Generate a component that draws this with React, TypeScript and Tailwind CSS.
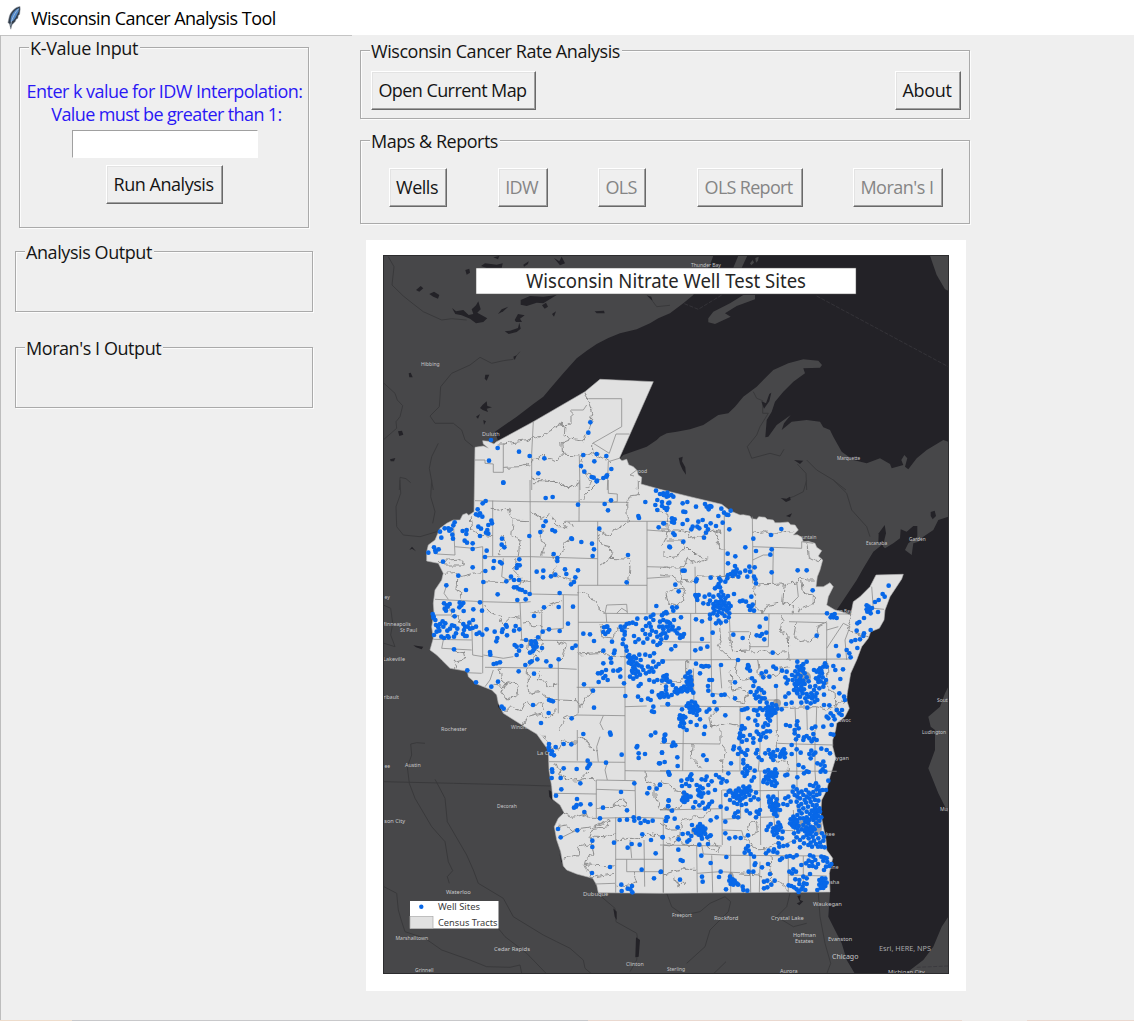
import type { ReactNode } from "react";

type Sheet = { x: number; y: number; data: string };

/* Survey sheets are drawn at three units to the pixel, each from its own origin. */
const NW = { x: 370, y: 240 };
const NE = { x: 660, y: 240 };
const W = { x: 370, y: 480 };
const E = { x: 660, y: 480 };
const SW = { x: 370, y: 730 };
const SE = { x: 660, y: 730 };

function place(origin: { x: number; y: number }, data: string): number[][] {
  return data
    .trim()
    .split(/\s+/)
    .map((pair) => {
      const [x, y] = pair.split(",").map(Number);
      return [origin.x + x / 3, origin.y + y / 3];
    });
}

function shape(...parts: [{ x: number; y: number }, string][]): string {
  return parts
    .flatMap(([o, d]) => place(o, d))
    .map(([x, y]) => x.toFixed(1) + "," + y.toFixed(1))
    .join(" ");
}

const SUPERIOR = shape(
  [NW, "375,575 440,530 490,492 520,470 545,440 580,400 620,355 650,332 680,312 715,294 750,280 800,268 840,250 865,235 900,220"],
  [NE, "40,212 70,190 100,165 125,110 150,75 160,47 865,47 865,605 850,600 800,630 770,655 745,688 735,680 742,655 733,645 724,660 730,675 695,685 690,672 660,655 620,670 580,660 545,635 520,590 510,570 490,562 480,545 440,540 395,545 365,570 372,550 392,525 350,555 325,590 316,592 320,540 335,515 345,485 370,455 400,425 435,400 430,385 480,383 486,375 475,362 430,358 385,370 340,390 315,415 290,440 250,470 225,500 205,520 175,525 130,555 90,568 50,575 20,580 0,590"],
  [NW, "860,600 830,620 760,645 740,665 500,620 385,605"],
);
const MICHIGAN = shape(
  [E, "865,110 835,120 820,150 790,170 775,185 760,190 755,225 735,210 745,190 772,170 772,138 760,138 740,155 722,148 720,175 700,190 675,205 665,195 640,215 610,265 590,300 560,345 530,390 500,500 450,700"],
  [SE, "450,300 470,470 510,486 505,560 520,590 545,640 560,690 585,732 735,732 790,690 820,650 845,590 865,560 865,250 835,190 805,115 825,60 825,0"],
  [E, "812,740 805,710 840,680 855,640 865,620"],
);
const WISCONSIN = shape(
  [NW, "315,622 340,618 355,624 340,612 338,602 355,604 372,612 378,606 490,545 645,455 690,418 850,425 748,655 756,662 770,658 776,674 790,680 800,690 805,705 815,712 813,732"],
  [E, "0,28 90,50 185,73 210,92 240,105 250,104 270,108 275,116 290,118 296,110 315,112 322,118 340,120 345,128 360,128 385,126 392,134 405,135 415,150 400,165 412,164 425,172 430,185 445,184 465,190 470,202 485,212 475,228 488,240 480,270 472,290 468,320 490,320 510,308 520,320 505,350 500,375 525,390 545,395 572,405 580,365 600,350 630,320 648,285 730,283 725,297 690,350 675,390 672,420 658,445 632,455 625,475 605,500 590,540 572,580 562,640 560,660 568,685 555,710 530,730"],
  [SE, "527,0 518,30 518,50 527,85 510,140 500,180 485,210 482,250 490,290 498,330 500,360 518,385 508,430 510,486 0,490"],
  [SW, "685,488 680,465 668,445 620,432 590,420 580,408 572,365 560,330 553,290 565,265 582,248 570,225 548,208 545,170 537,120 535,60 520,40 500,12"],
  [W, "480,750 440,725 400,700 385,670 380,645 365,630 340,620 320,612 295,590 292,574 240,565 215,540 200,525 180,510 190,475 185,440 192,400 190,370 195,330 215,300 220,280 205,250 170,243 170,215 175,195 195,180 210,145 230,130 250,120 270,120 278,104 290,100 296,106 312,95"],
);

const ISLANDS = [
  shape([NE, "145,235 160,215 210,190 250,165 285,165 285,178 230,198 195,220 212,230 165,252 145,247"]),
  shape([NE, "220,83 235,47 262,47 245,83"]),
  shape([NE, "270,70 278,60 282,68 274,76"]),
  shape([NE, "286,54 296,50 294,62 288,68"]),
  shape([NE, "810,47 865,47 865,152 855,148 830,105"]),
];

const PONDS: Sheet[] = [
  { ...NW, data: "138,150 152,138 160,145 148,155" },
  { ...NW, data: "178,162 192,155 208,165 204,176 190,170" },
  { ...NW, data: "246,204 258,214 280,210 296,225 310,222 305,208 318,196 325,184 332,208 322,218 352,235 340,246 318,250 300,236 275,226 256,222" },
  { ...NW, data: "384,222 395,208 415,200 400,214" },
  { ...NW, data: "333,78 345,70 380,74 398,70 395,84 350,84" },
  { ...NW, data: "370,52 388,48 384,58" },
  { ...NW, data: "460,74 476,64 474,72 462,80" },
  { ...NW, data: "286,90 298,86 300,98 290,104" },
  { ...NW, data: "552,54 570,76 585,70 575,50 568,64" },
  { ...NW, data: "452,180 480,168 520,170 560,165 520,190 500,188 470,198 452,194" },
  { ...NW, data: "516,196 528,188 534,200 524,206" },
  { ...NW, data: "546,222 558,214 552,230" },
  { ...NW, data: "434,240 444,222 464,226 450,236 456,246 438,246" },
  { ...NW, data: "404,274 420,272 444,264 448,248 452,266 440,276 416,282" },
  { ...NW, data: "674,214 702,212 704,220 680,220" },
  { ...NW, data: "830,166 848,184 844,170" },
  { ...NW, data: "116,400 122,398 128,412 118,412" },
  { ...NW, data: "346,404 358,404 350,422 344,416" },
  { ...NW, data: "338,494 350,484 352,498 366,502 350,506 354,516 338,510 330,504" },
  { ...NW, data: "318,530 330,522 324,536" },
  { ...NW, data: "340,540 348,544 342,554" },
  { ...NW, data: "84,574 96,572 100,584 88,588" },
  { ...NW, data: "60,658 76,654 72,664 62,664" },
  { ...NW, data: "430,350 440,346 434,360" },
  { ...NE, data: "56,654 68,650 66,664 76,682 78,704 68,690 60,672" },
  { ...NE, data: "304,484 318,490 328,462 334,458 328,484 312,506" },
  { ...NE, data: "402,660 430,662 420,672" },
  { ...E, data: "362,54 380,56 390,50 392,60 378,66" },
  { ...E, data: "378,108 396,100 390,112" },
  { ...E, data: "656,160 674,135 678,160 668,200 655,190" },
  { ...E, data: "812,96 824,92 828,108 818,118 812,108" },
  { ...W, data: "118,210 126,200 138,214 126,206" },
  { ...W, data: "130,496 144,498 160,500 155,508 138,502" },
  { ...W, data: "384,668 396,680 394,692 384,680" },
  { ...SW, data: "536,180 546,185 548,212 538,200" },
  { ...SW, data: "568,262 582,244 582,254 572,270" },
  { ...SW, data: "568,370 578,400 574,396" },
  { ...SW, data: "730,535 740,545 740,570 734,560" },
  { ...SW, data: "798,622 810,630 806,680 796,682" },
  { ...SE, data: "412,498 422,496 420,510 430,514 418,526 410,520 420,516" },
];

const RIVERS: Sheet[] = [
  { ...NW, data: "55,50 72,80 66,135 100,168 130,192 160,215 215,240 245,236 290,240" },
  { ...NW, data: "450,335 430,358 400,362 365,370 330,352 300,375 245,400 212,440 208,500 180,528 195,550 250,550 275,570 285,600 310,620" },
  { ...NW, data: "42,430 75,460 82,480 98,497 90,530 78,545 80,565 42,598" },
  { ...NW, data: "205,610 185,650 178,685 190,750" },
  { ...NW, data: "88,750 90,712 108,716 122,728" },
  { ...NW, data: "848,184 860,200 900,196" },
  { ...W, data: "90,0 92,40 78,80 80,140 100,165 150,170 200,155" },
  { ...W, data: "185,0 182,50 195,95 188,130" },
  { ...W, data: "40,375 62,385 68,430 62,465 75,500 42,490" },
  { ...NE, data: "280,455 290,475 308,482 308,520 325,520 300,560 290,585 262,620 275,655 330,640 360,648 372,628" },
  { ...NE, data: "412,672 438,700 440,750" },
  { ...NE, data: "440,660 470,690 520,720 558,750" },
  { ...E, data: "440,0 430,35 400,50 380,56" },
  { ...E, data: "520,0 560,40 575,90 620,140 630,170" },
  { ...SW, data: "165,40 140,38 122,42 125,75 112,110 118,160 135,205 185,290 225,335 235,395 248,422 232,440 238,460" },
  { ...SW, data: "195,148 212,180 225,205 232,275 290,375 310,420 325,460 400,505 430,560 520,615 560,635 600,655 640,690 645,715 665,732" },
  { ...SW, data: "42,155 250,160 450,165 540,168" },
  { ...SW, data: "42,470 80,490 85,540 95,575 105,605 165,625 215,660 300,690 350,710 420,712 450,705 455,730" },
  { ...SW, data: "385,595 405,620 470,670 530,732" },
  { ...SW, data: "688,495 735,535 738,575 800,610 805,640 800,690 780,725" },
  { ...SE, data: "20,490 35,530 70,555 120,545 150,520 195,500 212,515 205,545 150,600 135,650 80,700" },
  { ...SE, data: "475,488 480,560 495,640 512,700 500,732" },
  { ...SE, data: "160,732 198,695" },
  { ...SE, data: "390,490 380,530 350,560 400,590 440,580" },
];

const BORDERS_DASHED: Sheet[] = [
  { ...NE, data: "470,168 865,380" },
  { ...NE, data: "185,165 115,208 70,190" },
  { ...SE, data: "770,712 865,708" },
];

const TRACTS: Sheet[] = [
  { ...NW, data: "645,455 655,485 668,520 662,550 655,580 640,600 600,595" },
  { ...NW, data: "655,476 755,476 755,560" },
  { ...NW, data: "755,560 668,610" },
  { ...NW, data: "668,610 668,640 700,655 720,668" },
  { ...NW, data: "650,495 640,510 603,510" },
  { ...NW, data: "603,510 603,552 570,555 520,585 470,602 400,612 380,612" },
  { ...NW, data: "490,545 485,640 485,750" },
  { ...NW, data: "400,612 400,697 370,697" },
  { ...NW, data: "370,697 370,672 345,670" },
  { ...NW, data: "345,670 345,660 315,660" },
  { ...NW, data: "400,682 450,680 485,672 485,655 510,655 522,642 535,655 562,662 572,645 628,648 640,640 668,645" },
  { ...NW, data: "570,552 588,560 585,590 600,595 575,605 578,645" },
  { ...NW, data: "628,648 630,750" },
  { ...NW, data: "748,655 715,665 712,750" },
  { ...NW, data: "778,582 738,582 718,640" },
  { ...NW, data: "718,640 670,610" },
  { ...NW, data: "640,700 665,705 680,720 700,715 712,700" },
  { ...NW, data: "485,715 560,725 600,745 630,725" },
  { ...NW, data: "640,648 632,680 645,705 665,720 650,745" },
  { ...NW, data: "800,690 780,705 792,708" },
  { ...W, data: "315,62 480,65 770,67" },
  { ...W, data: "480,0 482,340" },
  { ...W, data: "368,62 368,228" },
  { ...W, data: "485,5 560,5 600,25 628,8" },
  { ...W, data: "628,0 627,125" },
  { ...W, data: "715,0 715,40 742,42" },
  { ...W, data: "742,42 742,65 720,67" },
  { ...W, data: "627,65 650,40 660,30 680,10" },
  { ...W, data: "805,0 805,45 778,48 770,70 772,124" },
  { ...W, data: "585,124 900,124" },
  { ...W, data: "683,124 683,316" },
  { ...W, data: "831,124 831,400" },
  { ...W, data: "482,95 500,105 515,115 540,100 560,140 590,140 580,125 605,130 610,140" },
  { ...W, data: "368,88 395,92 415,88 430,120 480,122" },
  { ...W, data: "430,120 425,165 450,180 445,228" },
  { ...W, data: "395,165 410,195 385,215 392,228" },
  { ...W, data: "250,122 255,225 200,222" },
  { ...W, data: "255,200 310,205 338,200" },
  { ...W, data: "338,200 338,580" },
  { ...W, data: "300,105 305,150 330,165 368,170" },
  { ...W, data: "338,230 482,230 683,236" },
  { ...W, data: "205,245 275,240 280,255 220,255" },
  { ...W, data: "222,280 260,278 270,290 310,280 338,275" },
  { ...W, data: "550,228 560,255 540,290 565,290 600,300 625,300" },
  { ...W, data: "520,150 510,175 525,190 515,225" },
  { ...W, data: "605,175 585,190 582,215 560,225" },
  { ...W, data: "683,150 720,170 735,145 760,138 770,125" },
  { ...W, data: "683,165 700,195 720,200 725,235 690,255" },
  { ...W, data: "720,235 775,238 780,260 775,315" },
  { ...W, data: "625,316 831,316" },
  { ...W, data: "338,305 400,308 430,295 482,305" },
  { ...W, data: "400,235 395,290 415,300" },
  { ...W, data: "440,235 430,270 450,290 440,330 482,340" },
  { ...W, data: "482,342 625,345" },
  { ...W, data: "625,316 625,700" },
  { ...W, data: "338,365 450,368 482,365" },
  { ...W, data: "195,358 338,365" },
  { ...W, data: "260,300 258,330 275,340 270,365" },
  { ...W, data: "232,310 222,340 235,358" },
  { ...W, data: "450,368 455,480 480,482" },
  { ...W, data: "338,375 360,400 390,410 400,430 420,410 450,415" },
  { ...W, data: "482,400 515,395 540,375 575,362" },
  { ...W, data: "580,345 580,445 520,450" },
  { ...W, data: "515,400 515,450 510,480" },
  { ...W, data: "455,430 480,425 485,440 515,440" },
  { ...W, data: "240,365 245,410 270,410 265,430 300,435" },
  { ...W, data: "190,405 245,405" },
  { ...W, data: "305,430 308,525 340,530" },
  { ...W, data: "190,478 305,480" },
  { ...W, data: "220,480 215,505 305,510" },
  { ...W, data: "250,510 280,515 285,535 252,545 258,565" },
  { ...W, data: "290,578 335,580" },
  { ...W, data: "340,525 400,535 430,530" },
  { ...W, data: "345,562 565,565 620,568" },
  { ...W, data: "450,480 625,482" },
  { ...W, data: "480,482 475,515 500,525 480,560" },
  { ...W, data: "560,482 590,495 580,530 565,545" },
  { ...W, data: "565,545 565,700" },
  { ...W, data: "500,470 520,490 510,515 490,505 500,480" },
  { ...W, data: "625,427 780,427" },
  { ...W, data: "625,335 660,345 680,380 705,400" },
  { ...W, data: "705,400 710,375 770,373" },
  { ...W, data: "770,373 772,400" },
  { ...W, data: "740,400 755,385 772,395" },
  { ...W, data: "700,400 900,402" },
  { ...W, data: "708,400 710,427" },
  { ...W, data: "625,525 700,520 730,530 765,530" },
  { ...W, data: "690,430 695,470 730,475 740,450 780,445" },
  { ...W, data: "620,622 765,622" },
  { ...W, data: "765,500 765,750" },
  { ...W, data: "625,700 600,710 580,720 570,750" },
  { ...W, data: "620,705 765,707" },
  { ...W, data: "700,707 690,730 700,750" },
  { ...W, data: "345,620 360,600 370,570" },
  { ...W, data: "370,615 400,620 410,605 440,612" },
  { ...W, data: "390,565 395,600 410,610 395,640 410,660 440,650 445,615" },
  { ...W, data: "475,565 475,640 510,635 525,650 565,660" },
  { ...W, data: "515,570 505,600 530,605 530,620 565,615" },
  { ...W, data: "400,700 420,680 455,690 470,660 480,675 515,670 520,690" },
  { ...W, data: "460,735 470,710 510,700 530,715 560,690" },
  { ...W, data: "565,660 620,662 630,680 650,650 665,640 660,622" },
  { ...W, data: "765,680 830,678" },
  { ...W, data: "831,150 900,155" },
  { ...W, data: "831,260 900,262" },
  { ...W, data: "831,295 900,290" },
  { ...E, data: "0,150 55,150 80,155 90,175 130,165 160,150 190,155" },
  { ...E, data: "193,90 193,288" },
  { ...E, data: "277,110 278,200 278,310" },
  { ...E, data: "278,200 425,205" },
  { ...E, data: "425,205 425,185 460,190" },
  { ...E, data: "278,160 310,155 350,160 400,155" },
  { ...E, data: "0,95 20,100 25,150 20,170 5,200" },
  { ...E, data: "20,180 60,180 75,200 50,230 15,235 15,210" },
  { ...E, data: "80,200 105,225 145,235 110,250 80,235 75,260 0,262" },
  { ...E, data: "160,150 175,180 175,205 193,208" },
  { ...E, data: "105,260 107,400" },
  { ...E, data: "60,262 65,300 107,305 115,288 225,290" },
  { ...E, data: "0,285 40,290 65,305 70,330 75,355 50,375 25,370 18,340 45,325 70,330" },
  { ...E, data: "0,400 570,402" },
  { ...E, data: "340,205 338,312" },
  { ...E, data: "285,315 370,312 410,305 420,290 440,300 470,300" },
  { ...E, data: "278,240 310,225 338,225" },
  { ...E, data: "370,312 365,370 400,375 400,400" },
  { ...E, data: "410,305 415,350 395,370" },
  { ...E, data: "425,300 430,340 460,345 460,370 420,385 415,400" },
  { ...E, data: "285,315 283,375 310,400 325,375 360,370" },
  { ...E, data: "440,190 445,230 475,245 485,235" },
  { ...E, data: "92,400 92,540" },
  { ...E, data: "152,402 155,640" },
  { ...E, data: "208,402 210,455 268,455" },
  { ...E, data: "268,455 270,510 222,512 210,480 210,455" },
  { ...E, data: "327,402 325,500 270,500" },
  { ...E, data: "0,485 150,487" },
  { ...E, data: "0,540 570,537" },
  { ...E, data: "370,405 360,450 385,470 387,540" },
  { ...E, data: "387,425 500,428 500,540" },
  { ...E, data: "410,430 405,470 420,485 450,482 475,470 470,440 500,425" },
  { ...E, data: "500,505 550,430 570,440" },
  { ...E, data: "570,440 555,480 560,540" },
  { ...E, data: "500,450 535,440" },
  { ...E, data: "635,320 640,385 672,388" },
  { ...E, data: "575,410 565,450 600,465 625,470" },
  { ...E, data: "180,430 185,470 175,500 195,520 215,535" },
  { ...E, data: "230,540 225,580 250,600 280,595" },
  { ...E, data: "180,560 185,625" },
  { ...E, data: "270,520 300,510 330,520 380,515" },
  { ...E, data: "290,540 295,580 320,590 350,585 360,565 387,560" },
  { ...E, data: "0,610 60,605 80,580 80,540" },
  { ...E, data: "100,565 102,680" },
  { ...E, data: "0,678 250,680 385,682" },
  { ...E, data: "210,570 215,630 245,625 265,640 250,665 225,660 220,640" },
  { ...E, data: "155,640 200,645 210,655" },
  { ...E, data: "180,680 150,710 155,740 200,730 235,735" },
  { ...E, data: "240,680 240,750" },
  { ...E, data: "350,625 352,750" },
  { ...E, data: "405,680 408,750" },
  { ...E, data: "440,680 442,750" },
  { ...E, data: "385,682 470,680 500,690 560,660" },
  { ...E, data: "500,540 500,620 525,640 530,700" },
  { ...E, data: "470,680 468,750" },
  { ...E, data: "300,620 305,660 350,660" },
  { ...SW, data: "622,0 622,92" },
  { ...SW, data: "537,95 765,97" },
  { ...SW, data: "765,0 765,150" },
  { ...SW, data: "622,20 650,30 660,50 680,65" },
  { ...SW, data: "690,20 680,50 685,95" },
  { ...SW, data: "510,12 540,40 540,65 570,50 575,35 620,40" },
  { ...SW, data: "560,100 575,140 610,150 660,145 679,150" },
  { ...SW, data: "650,95 655,120 640,140 630,155" },
  { ...SW, data: "552,190 679,192" },
  { ...SW, data: "679,150 679,265" },
  { ...SW, data: "679,150 795,152 797,262" },
  { ...SW, data: "797,262 679,265" },
  { ...SW, data: "679,178 795,182" },
  { ...SW, data: "680,235 730,232 740,212 765,210 770,230 750,225 730,232" },
  { ...SW, data: "582,250 610,262 650,250 655,265 679,265" },
  { ...SW, data: "765,122 900,124" },
  { ...SW, data: "825,125 830,150 855,165 855,200 870,235 900,240" },
  { ...SW, data: "712,98 705,120 712,150" },
  { ...SW, data: "560,290 590,285 610,300 660,295 720,270" },
  { ...SW, data: "570,325 600,310 622,300" },
  { ...SW, data: "580,385 620,375 630,350 660,345 670,318 700,320 735,312" },
  { ...SW, data: "720,270 715,290 670,295 660,320 672,375 650,385 645,405 735,408" },
  { ...SW, data: "737,262 737,488" },
  { ...SW, data: "737,388 880,388" },
  { ...SW, data: "770,388 770,425 880,425" },
  { ...SW, data: "822,330 824,470" },
  { ...SW, data: "737,330 780,325 810,330 830,310 880,322" },
  { ...SW, data: "797,262 880,265 880,488" },
  { ...SW, data: "645,405 660,440 680,440 735,430" },
  { ...SW, data: "675,462 735,460" },
  { ...SW, data: "790,425 800,460 770,470 740,465" },
  { ...SW, data: "780,330 785,385" },
  { ...SW, data: "880,345 900,348" },
  { ...SE, data: "0,122 530,124" },
  { ...SE, data: "0,40 180,42" },
  { ...SE, data: "70,0 68,122" },
  { ...SE, data: "100,45 95,85 110,100 125,120" },
  { ...SE, data: "180,0 180,40 200,65 185,90 185,122" },
  { ...SE, data: "240,0 240,122" },
  { ...SE, data: "300,10 300,60 295,124" },
  { ...SE, data: "352,0 352,90 385,95 385,124" },
  { ...SE, data: "408,0 410,90 412,240" },
  { ...SE, data: "352,40 410,42 520,45" },
  { ...SE, data: "465,0 465,124 470,200" },
  { ...SE, data: "0,155 30,160 45,185 80,190 70,225 45,240 0,235" },
  { ...SE, data: "0,240 185,236" },
  { ...SE, data: "185,180 187,345" },
  { ...SE, data: "187,180 300,182 410,180" },
  { ...SE, data: "300,124 302,345" },
  { ...SE, data: "240,182 242,265 187,268" },
  { ...SE, data: "355,182 357,260 302,262" },
  { ...SE, data: "0,345 185,348" },
  { ...SE, data: "10,348 10,488" },
  { ...SE, data: "0,280 30,300 60,300 70,270 100,260 130,265 150,240" },
  { ...SE, data: "25,325 45,318 50,335 30,345 22,335" },
  { ...SE, data: "60,300 55,320 75,345 110,348" },
  { ...SE, data: "110,348 112,488" },
  { ...SE, data: "125,345 130,372 210,376" },
  { ...SE, data: "150,320 145,350 170,370 180,350 160,340" },
  { ...SE, data: "12,435 45,425 70,418 112,418" },
  { ...SE, data: "40,435 45,460 60,468 72,455 58,445" },
  { ...SE, data: "112,430 180,425 240,428" },
  { ...SE, data: "155,376 158,488" },
  { ...SE, data: "212,348 212,488" },
  { ...SE, data: "212,376 500,378" },
  { ...SE, data: "270,378 272,488" },
  { ...SE, data: "300,395 298,488" },
  { ...SE, data: "330,378 335,450 360,460 385,485" },
  { ...SE, data: "385,378 385,488" },
  { ...SE, data: "430,378 430,488" },
  { ...SE, data: "250,320 275,345 300,360 340,350 350,330" },
  { ...SE, data: "265,300 270,275 290,280 292,310 265,320" },
  { ...SE, data: "187,300 245,302 250,320" },
  { ...SE, data: "240,432 300,435 310,460 340,455" },
  { ...SE, data: "212,455 240,460 250,488" },
  { ...SE, data: "400,240 405,330 380,340" },
  { ...SE, data: "340,240 345,300 400,302" },
  { ...SE, data: "385,435 500,438" },
];

const WELLS: Sheet[] = [
  {
    ...NW,
    data: "661,547 655,578 363,600 383,624 357,662 447,635 479,648 523,655 505,700 400,728 640,645 680,642 709,648 673,664 633,678 643,695 724,687 665,711 671,713 681,722 700,714 709,710 711,706",
  },
  {
    ...W,
    data: "400,8 680,4 527,54 548,51 624,74 723,61 704,72 714,91 826,66 805,108 807,114 347,63 338,70 323,88 318,103 330,100 337,110 325,106 364,122 366,130 355,135 352,150 355,161 348,158 254,127 250,136 243,148 235,145 224,145 238,152 210,155 247,164 249,176 214,173 290,150 278,153 289,162 325,140 333,146 330,168 284,182 291,188 308,190 308,207 192,202 206,208 196,211 175,218 197,216 350,212 345,231 219,245 308,262 265,287 229,316 288,330 340,306 346,273 370,264 372,243 390,246 395,250 448,238 442,255 449,256 440,264 478,168 396,176 395,194 403,202 520,138 527,124 511,156 547,150 555,154 604,175 606,177 634,186 666,191 672,208 668,228 688,146 774,225 770,307 551,222 562,234 562,243 500,275 520,272 519,292 543,289 556,284 585,268 589,282 624,271 616,292 603,313 612,306 569,339 423,290 447,300 409,304 432,322 440,322 448,328 456,330 466,336 479,342 442,360 467,358 383,343 432,300 330,367 336,392 310,388 522,382 566,381 609,380 492,408 594,431 569,453 537,448 518,455 640,461 660,463 672,483 617,497 607,504 859,378 222,370 231,376 239,372 224,386 228,392 233,380 269,368 280,369 274,376 268,382 249,392 281,393 254,409 188,402 190,413 196,420 191,410 198,435 205,442 210,432 218,424 226,430 220,440 200,455 192,465 208,452 214,470 222,474 233,468 232,452 240,446 246,436 253,438 262,446 258,460 252,470 236,472 280,432 285,440 282,450 279,462 285,468 293,440 298,428 309,420 300,446 308,444 318,440 290,468 320,462 328,458 337,464 350,448 374,455 382,474 379,484 396,456 398,448 408,435 410,440 411,466 432,452 437,438 448,448 468,480 434,495 440,500 454,498 447,512 440,525 360,516 361,524 252,508 484,492 490,500 498,490 504,472 492,508 480,518 488,514 500,500 516,504 495,484 484,484 371,552 380,550 390,547 466,555 480,547 485,544 502,538 529,544 542,558 566,538 446,574 492,581 292,571 318,607 384,605 364,620 642,613 669,632 672,683 605,715 537,660 543,662 549,664 489,675 536,699 513,729 395,680 401,686 802,416 858,32 870,42 862,60 856,75 862,90 880,40 890,50 876,66 884,84 895,70 880,130 866,142 898,200 881,45 890,90 702,442 710,440 718,450 700,456 706,462 714,456 712,440 726,485 700,512 732,520 734,512 722,535 724,548 700,550 686,606 684,580 696,576 706,588 713,600 700,594 730,572 744,572 750,568 751,590 692,580 708,570 752,440 764,440 756,450 764,464 760,478 758,492 770,432 778,430 788,428 798,432 764,455 828,415 842,410 850,404 850,420 838,430 828,438 818,450 826,462 832,476 820,488 840,464 858,456 862,470 872,465 850,485 862,495 870,490 868,440 880,420 890,400 895,426 876,406 890,440 806,478 792,468 796,486 770,512 778,525 768,500 774,530 780,540 784,552 790,545 798,535 800,550 790,562 796,568 806,556 812,540 808,524 815,560 820,570 804,575 796,580 788,578 780,590 790,596 800,590 810,584 828,580 838,575 845,565 850,575 834,560 850,545 858,560 866,552 878,544 840,528 852,520 826,524 762,610 766,648 806,618 812,612 838,600 852,605 862,600 876,602 884,588 890,595 804,650 814,660 834,656 842,660 846,635 850,680 846,694 852,696 866,645 874,640 882,650 890,642 893,672 870,652 888,630 895,605 880,448 885,460 896,452 888,474 874,478 842,440 846,452 786,534 792,530 776,548 786,572 794,558",
  },
  {
    ...E,
    data: "12,45 22,38 25,48 34,45 40,50 28,68 6,78 22,84 68,70 82,66 108,80 70,95 76,96 135,72 140,80 150,78 146,88 154,80 175,108 184,86 192,98 200,104 212,92 205,105 36,115 44,118 36,126 42,128 12,130 68,132 82,120 94,148 98,140 115,125 112,140 118,145 128,120 138,138 152,130 168,138 188,128 144,148 208,148 138,158 132,173 40,160 44,165 70,185 30,202 256,202 280,176 333,165 364,147 335,208 331,224 288,213 226,229 203,221 204,250 413,271 440,271 335,277 458,331 686,317 68,272 74,272 110,298 108,304 46,314 56,334 225,258 230,268 220,275 212,282 204,285 218,288 226,282 235,290 240,278 228,276 256,272 268,260 284,262 270,275 262,290 282,290 286,298 288,310 152,293 178,295 182,302 176,312 172,320 180,322 196,305 202,295 165,325 148,344 160,350 176,345 184,335 190,345 196,355 204,348 108,346 116,345 110,352 112,360 134,350 130,370 145,372 150,362 160,372 168,365 175,372 184,362 190,372 198,378 206,370 212,378 180,384 190,388 176,395 186,400 200,392 206,386 164,392 150,404 160,400 172,406 194,408 208,400 206,412 150,416 176,422 182,428 168,430 198,424 240,364 248,362 258,365 274,350 266,378 274,380 270,390 282,392 278,374 222,342 106,345 37,382 50,382 40,392 18,396 12,400 0,425 8,440 20,425 30,430 26,440 38,440 42,420 63,412 36,448 46,452 56,445 52,460 62,466 72,462 60,474 68,470 20,470 8,460 0,490 46,498 34,508 108,418 126,424 158,458 126,477 142,500 122,506 106,511 220,464 248,474 299,440 318,416 290,466 300,468 306,462 313,478 319,458 338,518 234,540 470,467 528,498 536,527 668,342 674,350 656,360 645,366 620,376 626,380 620,388 630,390 636,384 632,400 622,395 654,396 612,414 598,426 592,430 590,452 612,460 610,468 600,478 586,480 574,484 632,450 592,504 560,510 568,520 572,532 516,405 524,402 520,412 530,414 512,412 501,400 108,551 124,558 130,560 138,558 146,559 183,555 8,545 84,580 90,575 92,590 84,594 80,605 88,610 94,600 96,615 84,625 94,630 100,638 76,590 120,580 148,600 156,600 144,618 145,632 158,645 163,666 72,620 64,625 56,630 48,625 44,635 52,640 60,634 10,590 18,600 30,605 20,585 38,615 18,620 8,640 25,650 35,645 4,645 24,673 95,665 105,668 85,670 112,680 88,684 98,688 106,690 80,678 90,696 100,698 118,690 66,688 140,695 148,688 170,688 60,706 70,708 58,716 66,718 76,712 64,728 72,730 60,738 70,742 110,705 120,718 92,726 110,735 80,750 135,740 196,706 184,645 194,644 225,607 225,655 264,555 262,565 270,572 266,560 305,580 310,592 318,575 328,590 340,560 348,566 348,618 276,595 284,604 280,618 296,625 272,636 290,635 284,645 304,630 312,638 296,650 288,655 306,655 300,665 320,668 314,655 412,545 430,552 440,545 424,558 418,570 428,572 414,582 422,588 434,580 406,590 398,600 410,602 420,598 430,602 440,592 414,612 408,620 402,630 416,628 424,620 434,612 446,604 412,640 420,650 428,640 436,655 440,665 446,650 454,640 462,630 450,620 466,618 475,606 468,595 478,590 486,580 470,575 462,570 480,565 490,560 495,550 500,560 488,592 482,604 492,610 498,600 490,620 478,625 470,640 456,655 464,665 472,660 396,585 380,610 376,592 384,600 366,572 380,575 386,640 376,650 442,683 424,668 452,670 520,558 526,570 549,568 541,597 521,622 538,640 492,644 552,650 555,660 546,690 530,690 538,700 520,708 512,700 505,715 524,718 515,735 492,675 508,676 490,740 500,710 545,705 246,690 254,688 262,685 282,690 290,692 300,685 308,690 318,685 324,680 330,690 336,682 342,690 348,676 346,698 352,686 328,700 320,705 334,706 324,715 330,722 316,730 324,735 294,705 265,715 286,722 292,735 310,740 246,738 254,745 244,748 378,672 395,668 365,688 378,735 390,738 412,724 410,735 416,745 404,750 456,745 466,740 182,352 172,380 194,366 202,384 168,378 186,376 178,366 160,384 412,560 424,564 430,566 406,574 418,606 426,610 404,612 410,634 424,632 432,628 440,642 458,646 466,650 474,598 480,578 484,572 476,570 322,695 340,700 336,672 326,710 338,694 52,632 66,634 88,602 92,608 84,614 92,624 76,630 82,634 92,678 100,680 108,676 112,694 60,712 68,722",
  },
  {
    ...SW,
    data: "640,12 720,8 722,14 755,74 708,98 653,92 660,102 656,108 652,114 620,117 581,115 537,42 557,51 581,42 604,43 537,60 546,64 544,72 552,76 536,52 546,118 547,126 545,144 572,144 574,178 558,197 631,160 793,160 621,207 620,225 632,223 661,223 612,233 618,230 643,246 699,233 753,186 771,241 690,265 564,297 622,301 572,322 667,332 667,351 732,338 720,411 666,429 749,270 771,269 791,262 793,272 807,265 812,279 824,272 834,276 848,272 817,313 773,353 785,342 809,344 843,330 878,322 857,370 815,419 852,445 873,425 754,464 755,483 786,468 773,476 781,478 787,487 843,16 856,8 884,15 884,30 802,48 800,52 806,70 806,84 825,72 876,68 867,100 884,96 896,128 898,134 838,174 832,190 870,164 860,176 896,211 895,229 893,262 888,272 882,34",
  },
  {
    ...SE,
    data: "16,14 12,26 14,32 40,38 46,46 36,48 6,68 52,82 53,108 25,126 28,133 0,100 0,165 26,212 24,228 36,242 20,262 18,272 44,266 53,292 8,321 2,426 55,359 62,390 68,393 60,449 56,328 68,312 132,12 130,76 140,90 213,100 94,133 90,140 82,148 95,150 64,152 78,162 66,168 88,168 125,148 140,140 136,150 155,154 145,165 168,135 178,142 188,148 184,158 205,130 200,154 145,188 165,180 120,170 128,175 114,180 120,188 130,190 116,196 124,200 110,165 72,188 80,195 70,202 66,210 74,216 82,210 86,200 78,206 70,214 92,200 100,232 106,216 118,226 128,218 135,236 148,222 156,215 144,230 182,230 200,236 170,262 152,271 96,285 102,300 114,290 120,282 128,290 136,296 118,300 108,308 124,308 132,305 124,318 116,314 136,312 126,326 142,322 152,316 150,318 84,310 94,318 88,330 82,335 118,344 144,342 196,275 196,310 208,325 226,322 242,324 264,316 264,348 258,356 266,362 254,368 272,372 282,380 124,377 152,399 199,381 182,425 177,441 126,440 128,455 210,440 218,448 208,452 216,455 224,452 212,462 220,464 230,460 198,478 234,464 248,470 250,480 262,482 266,425 284,405 286,400 280,425 306,412 324,402 330,432 312,455 322,452 312,475 322,472 334,464 344,452 366,385 360,390 352,368 340,365 342,358 358,350 356,340 370,348 382,346 366,325 318,370 326,362 380,380 390,378 400,382 410,376 388,425 400,418 396,430 408,425 424,405 430,440 438,400 450,376 460,380 446,392 456,396 466,390 474,402 458,408 468,412 448,408 484,380 492,382 500,385 490,392 502,396 498,410 508,408 492,420 514,402 450,432 440,445 418,450 406,448 418,462 428,470 432,460 440,462 436,480 424,478 410,478 402,472 394,468 386,466 416,486 472,480 478,450 486,445 496,446 482,456 490,456 500,458 478,464 488,466 496,468 482,474 490,474 240,10 250,18 238,25 260,30 246,35 270,15 280,25 296,12 304,20 310,10 318,22 300,30 320,4 290,5 280,38 220,58 238,55 244,65 254,70 262,60 258,75 234,72 222,50 292,60 288,70 296,82 305,90 316,70 326,60 330,72 340,66 346,78 334,82 340,90 352,60 362,72 368,62 376,70 360,80 374,82 395,72 372,58 395,45 404,10 415,18 408,28 430,30 440,18 448,25 455,34 462,26 470,30 460,12 432,22 454,62 448,72 460,74 466,68 452,85 422,68 410,58 484,56 500,60 510,70 512,12 520,14 490,95 482,104 494,108 488,118 496,125 482,125 472,100 416,105 430,112 440,124 446,126 432,130 250,100 262,108 255,116 270,114 262,124 248,128 254,138 260,132 275,152 282,142 250,90 284,122 315,125 325,120 334,128 346,118 350,130 330,138 340,142 348,138 318,140 326,148 334,156 344,152 312,150 322,160 350,160 345,168 336,165 376,136 382,134 310,156 412,142 468,160 460,168 450,165 505,152 498,180 488,180 475,170 210,182 218,190 228,182 236,176 246,185 254,180 262,186 272,182 250,170 260,175 268,170 220,200 230,205 238,198 248,205 256,200 210,210 222,218 232,222 245,225 258,222 272,210 282,202 288,188 295,208 245,192 228,190 268,195 240,212 206,185 198,195 226,250 234,245 222,260 234,262 260,242 270,250 290,245 296,252 288,262 300,240 325,200 332,208 340,200 350,208 328,218 338,222 348,218 330,230 344,232 336,240 346,245 352,238 342,252 350,258 328,212 355,225 360,240 376,205 385,200 370,222 382,225 392,215 398,185 410,178 416,188 404,195 412,200 400,170 425,185 438,180 446,188 430,195 440,200 450,192 460,186 470,178 480,182 420,205 434,210 448,205 460,200 470,195 478,192 410,215 424,222 438,218 452,215 465,210 475,212 458,225 444,230 430,235 416,228 470,225 478,235 465,235 455,242 470,248 480,245 475,258 462,255 450,252 440,245 412,255 425,250 418,242 400,260 392,268 400,275 410,270 420,265 408,282 396,285 404,292 416,288 390,280 430,265 440,262 436,275 445,280 430,285 440,292 452,290 448,270 460,270 468,265 478,272 484,262 425,298 435,304 446,300 456,305 464,298 450,312 440,315 430,322 446,325 458,320 468,312 475,325 462,332 452,338 468,342 480,338 490,332 484,350 494,352 474,350 456,350 445,345 432,340 420,330 410,322 402,335 402,310 415,305 412,295 492,320 486,310 420,352 325,290 332,282 340,295 350,290 346,300 338,305 356,300 362,292 350,310 342,315 355,322 368,305 360,285 320,300 355,278 462,245 474,240 468,256 456,262 468,280 476,288 404,266 412,276 400,290 408,275 436,298 444,308 452,298 460,292 440,270 332,214 340,228 348,226 342,240 346,250 326,132 340,132 344,126 322,146 230,196 252,190 264,180 240,184 236,204 256,184 120,294 128,300 120,306 112,298 214,450 222,458 486,460 494,462 484,468 118,184 124,192 76,200 366,66 370,74 336,76 240,20 330,4",
  },
];

const PLACES: [string, number, number, number][] = [
  ["Thunder Bay", 691, 267, 5],
  ["Hibbing", 421, 366, 5],
  ["Duluth", 482, 435.5, 5.5],
  ["wood", 634, 473, 5],
  ["Marquette", 837, 460, 4.7],
  ["Iron Mountain", 784, 539, 4.8],
  ["Escanaba", 866, 545, 4.8],
  ["Garden", 909, 540.5, 4.8],
  ["ey", 384.5, 599, 5],
  ["Minneapolis", 381, 626, 5.2],
  ["St Paul", 400, 632, 5.3],
  ["Lakeville", 383, 661, 5.5],
  ["Faribault", 378, 699, 5],
  ["Rochester", 441, 730.5, 5.5],
  ["Winona", 511, 729, 5],
  ["La Crosse", 537, 755, 5.8],
  ["ee", 384.5, 768, 5],
  ["Austin", 405, 767, 5.3],
  ["Decorah", 497, 808, 5],
  ["Mason City", 376, 822.5, 5.6],
  ["Waterloo", 446, 894, 5.8],
  ["Dubuque", 583, 896, 5.8],
  ["Marshalltown", 395.500, 940, 5.1],
  ["Cedar Rapids", 494, 951, 5.8],
  ["Clinton", 626, 966, 5.3],
  ["Grinnell", 415, 972, 5],
  ["Sterling", 667, 970.5, 5],
  ["Freeport", 672, 917, 4.9],
  ["Rockford", 714, 920, 5.8],
  ["Crystal Lake", 771, 920, 5.8],
  ["Waukegan", 813, 906, 5.8],
  ["Hoffman", 793, 937, 5.5],
  ["Estates", 795, 943, 5.5],
  ["Evanston", 828, 941, 5.6],
  ["Chicago", 832, 959, 7],
  ["Aurora", 780, 973, 5.5],
  ["Michigan City", 888, 974, 5.8],
  ["Manitowoc", 825, 721.5, 5],
  ["Sheboygan", 820, 760, 5.5],
  ["Milwaukee", 807, 836, 5.5],
  ["Racine", 823, 869, 5],
  ["Kenosha", 817, 884, 5.5],
  ["South", 937, 702, 5],
  ["Ludington", 922, 734, 5],
  ["Mus", 940, 811, 5],
  ["Green Bay", 830, 613, 4.5],
];

const CITY_BLOCKS: [number, number, number, number][] = [
  [818, 827, 4, 8],
  [803, 824, 4, 4],
  [777, 703, 4, 4],
  [804, 677, 7, 6],
  [699, 831, 8, 5],
  [534, 644, 4, 4],
  [731, 878, 3, 6],
  [689, 684, 4, 4],
];

function lines(list: Sheet[]): string[] {
  return list.map((s) => shape([s, s.data]));
}

const isWinding = (s: Sheet) => s.data.split(" ").length > 3;
const SURVEYED = TRACTS.filter((s) => !isWinding(s));
const WINDING = TRACTS.filter(isWinding);

function WellMap() {
  return (
    <svg
      className="block h-[751px] w-[600px] bg-white font-['Noto_Sans',sans-serif]"
      viewBox="366 240 600 751"
      role="img"
      aria-label="Wisconsin Nitrate Well Test Sites"
    >
      <defs>
        <clipPath id="frame">
          <rect x="383" y="255" width="566" height="719" />
        </clipPath>
        <filter id="meander" filterUnits="userSpaceOnUse" x="383" y="255" width="566" height="719">
          <feTurbulence type="fractalNoise" baseFrequency="0.16" numOctaves="2" seed="4" />
          <feDisplacementMap in="SourceGraphic" scale="7" xChannelSelector="R" yChannelSelector="G" />
        </filter>
      </defs>
      <g clipPath="url(#frame)">
        <rect x="383" y="255" width="566" height="719" fill="#474749" />
        <g fill="none" stroke="#39393b" strokeWidth="1" strokeLinejoin="round">
          {lines(RIVERS).map((p) => (
            <polyline key={p} points={p} />
          ))}
        </g>
        <g fill="#232227">
          <polygon points={SUPERIOR} />
          <polygon points={MICHIGAN} />
          {lines(PONDS).map((p) => (
            <polygon key={p} points={p} />
          ))}
        </g>
        <g fill="#474749">
          {ISLANDS.map((p) => (
            <polygon key={p} points={p} />
          ))}
        </g>
        <g fill="none" stroke="#38373c" strokeWidth="0.8" strokeDasharray="4 1.5">
          {lines(BORDERS_DASHED).map((p) => (
            <polyline key={p} points={p} />
          ))}
        </g>
        <g fill="#c9c9cb">
          {PLACES.map(([name, x, y, size]) => (
            <text key={name} x={x} y={y} fontSize={size}>
              {name}
            </text>
          ))}
        </g>
        <polygon points={WISCONSIN} fill="#e1e1e1" stroke="#b5b5b5" strokeWidth="0.6" />
        <g fill="none" stroke="#8c8c8c" strokeWidth="0.8" strokeLinejoin="round">
          {lines(SURVEYED).map((p) => (
            <polyline key={p} points={p} />
          ))}
        </g>
        <g fill="none" stroke="#858585" strokeWidth="0.9" strokeLinejoin="round" filter="url(#meander)">
          {lines(WINDING).map((p) => (
            <polyline key={p} points={p} />
          ))}
        </g>
        <g fill="#77777a" fillOpacity="0.6">
          {CITY_BLOCKS.map(([x, y, rx, ry]) => (
            <ellipse key={x} cx={x} cy={y} rx={rx} ry={ry} />
          ))}
        </g>
        <g fill="#0868e8">
          {WELLS.flatMap((s) => place(s, s.data)).map(([x, y], i) => (
            <circle key={i} cx={x} cy={y} r="2.35" />
          ))}
        </g>
        <text x="879" y="951" fontSize="7.5" fill="#a9a9ab" textLength="52" lengthAdjust="spacingAndGlyphs">
          Esri, HERE, NPS
        </text>
      </g>
      <rect x="383.5" y="255.5" width="565" height="718" fill="none" stroke="#2c2c2e" />

      <rect x="476" y="268" width="380" height="26" fill="#fff" stroke="#555" strokeWidth="0.5" />
      <text x="526" y="287.6" fontSize="19.5" fill="#262626" textLength="280" lengthAdjust="spacingAndGlyphs">
        Wisconsin Nitrate Well Test Sites
      </text>

      <rect x="410" y="901" width="88.5" height="27.5" fill="#fff" />
      <circle cx="421.3" cy="906.7" r="2.2" fill="#0868e8" />
      <rect x="410" y="916.5" width="23" height="12" fill="#e1e1e1" stroke="#aaa" strokeWidth="0.7" />
      <text x="438" y="910.3" fontSize="8.8" fill="#3c3c3c" textLength="42" lengthAdjust="spacingAndGlyphs">
        Well Sites
      </text>
      <text x="438" y="926.3" fontSize="8.8" fill="#3c3c3c" textLength="59.5" lengthAdjust="spacingAndGlyphs">
        Census Tracts
      </text>
    </svg>
  );
}

function Frame({ title, tracking, className, children }: { title: string; tracking: string; className: string; children?: ReactNode }) {
  return (
    <section className={"border border-[#aaa] shadow-[1px_1px_0_#fcfcfc,inset_1px_1px_0_#fcfcfc] " + className}>
      <h2 className={"-mt-3 ml-[9px] w-fit bg-[#efefef] pr-0.5 pl-px leading-6 whitespace-nowrap " + tracking}>{title}</h2>
      {children}
    </section>
  );
}

function Button({ label, className, disabled }: { label: string; className: string; disabled?: boolean }) {
  return (
    <button
      type="button"
      disabled={disabled}
      className={
        "flex h-[39px] shrink-0 items-center justify-center border border-t-white border-r-[#696969] border-b-[#696969] border-l-white bg-[#efefef] pr-0.5 pb-px whitespace-nowrap shadow-[inset_-1px_-1px_0_#a0a0a0,inset_1px_1px_0_#e3e3e3] disabled:text-[#858585] " +
        className
      }
    >
      {label}
    </button>
  );
}

function Feather() {
  return (
    <svg className="h-6 w-4" viewBox="0 0 16 24">
      <path d="M14 .4C9.500 1 5 5 3.300 10.500L2 16.500l1.500 1.500L4.800 23.200l1.200-4.500 3.200-3.200 1-2.300 1.700-1 .3-2.500 1.400-1.500.6-5z" fill="#303b48" stroke="#8c959e" strokeWidth=".5" />
      <path d="M13 2C9 3.500 5.800 7.500 4.800 12l-.4 4 3-1.500 2-2.500 1.500-3 1.700-3.500z" fill="#4f86c6" />
      <path d="M12.600 2.800C9 6.500 6.300 11 4.600 19.500" fill="none" stroke="#a9bfd8" strokeWidth=".9" />
    </svg>
  );
}

export default function App() {
  return (
    <div className="flex h-[1021px] w-[1134px] flex-col overflow-hidden bg-[#efefef] font-['Open_Sans',sans-serif] text-lg text-[#151515]">
      <header className="flex h-[35px] shrink-0 items-center bg-white pl-[6px] text-black">
        <Feather />
        <h1 className="ml-[9px] pt-px leading-6 tracking-[-0.53px]">Wisconsin Cancer Analysis Tool</h1>
      </header>

      <main className="flex h-[985px] shrink-0 border-l border-[#bdbdbd]">
        <div className="w-[351px] shrink-0 border-t border-[#c4c4c4] pl-3.5">
          <Frame title="K-Value Input" tracking="tracking-[-0.33px]" className="mt-[11px] ml-1 h-[181px] w-[290px]">
            <form className="mt-5 flex flex-col items-center pl-px">
              <label htmlFor="k" className="text-center leading-[23px] whitespace-nowrap text-[#2a18f5]">
                <span className="block tracking-[-0.54px]">Enter k value for IDW Interpolation:</span>
                <span className="block pl-1 tracking-[-0.62px]">Value must be greater than 1:</span>
              </label>
              <input
                id="k"
                className="mt-1 h-7 w-[186px] border border-t-[#a0a0a0] border-r-white border-b-white border-l-[#a0a0a0] bg-white outline-none"
              />
              <Button label="Run Analysis" className="mt-[7px] w-[117px] tracking-[-0.46px]" />
            </form>
          </Frame>
          <Frame title="Analysis Output" tracking="tracking-[-0.42px]" className="mt-[23px] h-[61px] w-[298px]" />
          <Frame title="Moran's I Output" tracking="tracking-[-0.44px]" className="mt-[35px] h-[61px] w-[298px]" />
        </div>

        <div className="ml-2 w-[610px] shrink-0 pt-[15px]">
          <Frame title="Wisconsin Cancer Rate Analysis" tracking="tracking-[-0.44px]" className="h-[69px]">
            <div className="mt-2 flex justify-between pr-2 pl-[10px]">
              <Button label="Open Current Map" className="w-[165px] tracking-[-0.58px]" />
              <Button label="About" className="w-[66px] tracking-[-0.35px]" />
            </div>
          </Frame>
          <Frame title="Maps & Reports" tracking="tracking-[-0.48px]" className="mt-[21px] h-[84px]">
            <div className="mt-[15px] flex justify-between pr-[26px] pl-7">
              <Button label="Wells" className="w-[58px] tracking-[-0.48px]" />
              <Button label="IDW" className="w-[50px] tracking-[-0.7px]" disabled />
              <Button label="OLS" className="w-[48px] tracking-[-0.7px]" disabled />
              <Button label="OLS Report" className="w-[106px] tracking-[-0.7px]" disabled />
              <Button label="Moran's I" className="w-[90px] tracking-[-0.5px]" disabled />
            </div>
          </Frame>
          <div className="mt-4 ml-1.5">
            <WellMap />
          </div>
        </div>
      </main>

      <footer className="flex h-px shrink-0">
        <div className="w-[72px] bg-[#eedccb]" />
        <div className="w-[516px] bg-[#c8c8ca]" />
        <div className="w-[374px] bg-[#ead8cf]" />
        <div className="w-[65px] bg-[#efecea]" />
        <div className="flex-1 bg-[#ead8cf]" />
      </footer>
    </div>
  );
}
